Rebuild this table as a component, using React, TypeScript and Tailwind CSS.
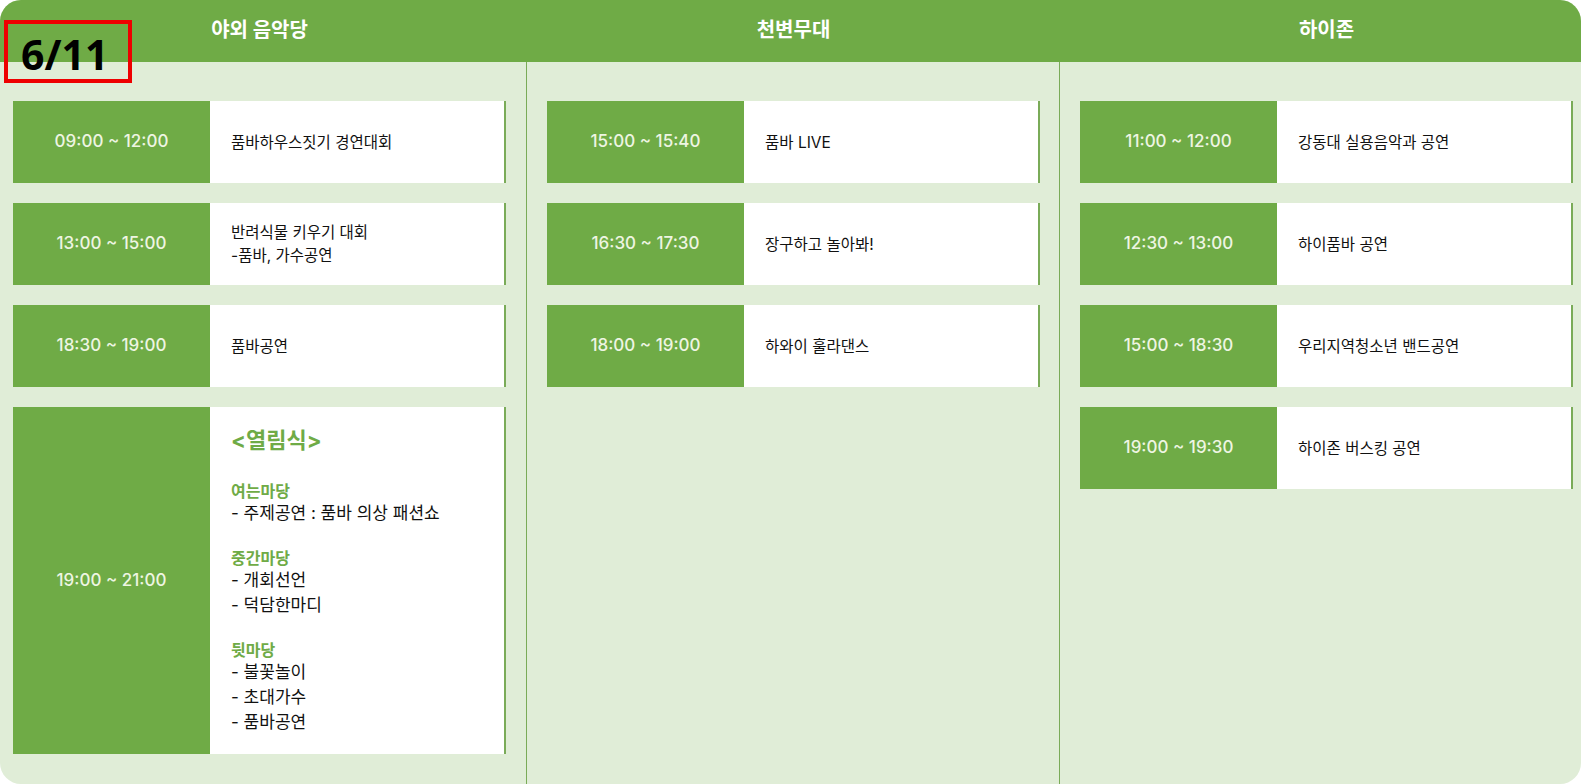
const stages = [
  {
    name: '야외 음악당',
    col: 'pl-[13px] pr-[20px]',
    items: [
      { time: '09:00 ~ 12:00', lines: ['품바하우스짓기 경연대회'] },
      { time: '13:00 ~ 15:00', lines: ['반려식물 키우기 대회', '-품바, 가수공연'] },
      { time: '18:30 ~ 19:00', lines: ['품바공연'] },
    ],
  },
  {
    name: '천변무대',
    col: 'border-l border-[#7aab58] pl-[20px] pr-[19px]',
    items: [
      { time: '15:00 ~ 15:40', lines: ['품바 LIVE'] },
      { time: '16:30 ~ 17:30', lines: ['장구하고 놀아봐!'] },
      { time: '18:00 ~ 19:00', lines: ['하와이 훌라댄스'] },
    ],
  },
  {
    name: '하이존',
    col: 'border-l border-[#7aab58] pl-[20px] pr-[8px]',
    items: [
      { time: '11:00 ~ 12:00', lines: ['강동대 실용음악과 공연'] },
      { time: '12:30 ~ 13:00', lines: ['하이품바 공연'] },
      { time: '15:00 ~ 18:30', lines: ['우리지역청소년 밴드공연'] },
      { time: '19:00 ~ 19:30', lines: ['하이존 버스킹 공연'] },
    ],
  },
];

const opening = [
  { title: '여는마당', items: ['- 주제공연 : 품바 의상 패션쇼'] },
  { title: '중간마당', items: ['- 개회선언', '- 덕담한마디'] },
  { title: '뒷마당', items: ['- 불꽃놀이', '- 초대가수', '- 품바공연'] },
];

function TimeBox({ time }: { time: string }) {
  return (
    <div className="flex w-[197px] shrink-0 items-center justify-center bg-[#6fab46] text-[17px] font-medium text-[#eef5e2]">
      {time}
    </div>
  );
}

function Slot({ time, lines }: { time: string; lines: string[] }) {
  return (
    <div className="flex h-[82px] w-[493px] border-r-2 border-[#7aab58] bg-white">
      <TimeBox time={time} />
      <div className="flex flex-col justify-center pl-[21px] text-[15.5px] leading-[23px] text-[#111]">
        {lines.map((l) => (
          <div key={l}>{l}</div>
        ))}
      </div>
    </div>
  );
}

function OpeningSlot() {
  return (
    <div className="flex w-[493px] border-r-2 border-[#7aab58] bg-white">
      <TimeBox time="19:00 ~ 21:00" />
      <div className="pl-[21px] pt-[18px] pb-[19px] text-[17px] text-[#111]">
        <div className="text-[22px] font-bold leading-[30px] text-[#6fab46]">&lt;열림식&gt;</div>
        {opening.map((g, i) => (
          <div key={g.title} className={i === 0 ? 'mt-[26px]' : 'mt-[22px]'}>
            <div className="text-[16px] font-bold leading-[20px] text-[#6fab46]">{g.title}</div>
            {g.items.map((it) => (
              <div key={it} className="leading-[25px]">{it}</div>
            ))}
          </div>
        ))}
      </div>
    </div>
  );
}

export default function App() {
  return (
    <div className="relative h-[784px] w-[1581px] overflow-hidden bg-white font-['Inter','Noto_Sans_CJK_KR',sans-serif]">
      <div className="flex h-full flex-col overflow-hidden rounded-[21px] bg-[#e0edd7]">
        {/* Header */}
        <div className="grid h-[62px] shrink-0 grid-cols-[526px_533px_1fr] bg-[#6fab46]">
          {stages.map((s) => (
            <div key={s.name} className={s.col.replace('border-l border-[#7aab58]', 'border-l border-transparent')}>
              <div className="flex h-full w-[493px] items-center justify-center pb-[2px] text-[20px] font-bold text-white">
                {s.name}
              </div>
            </div>
          ))}
        </div>

        {/* Columns */}
        <div className="grid flex-1 grid-cols-[526px_533px_1fr]">
          {stages.map((s, idx) => (
            <div key={s.name} className={`${s.col} flex flex-col gap-[20px] pt-[39px]`}>
              {s.items.map((it) => (
                <Slot key={it.time} time={it.time} lines={it.lines} />
              ))}
              {idx === 0 && <OpeningSlot />}
            </div>
          ))}
        </div>
      </div>

      {/* Date badge */}
      <div className="absolute left-[4px] top-[20px] flex h-[63px] w-[128px] items-end border-4 border-[#ee0000] pl-[13px]">
        <span className="font-['Noto_Sans',sans-serif] text-[41px] font-bold leading-[50px] text-black">6/11</span>
      </div>
    </div>
  );
}
